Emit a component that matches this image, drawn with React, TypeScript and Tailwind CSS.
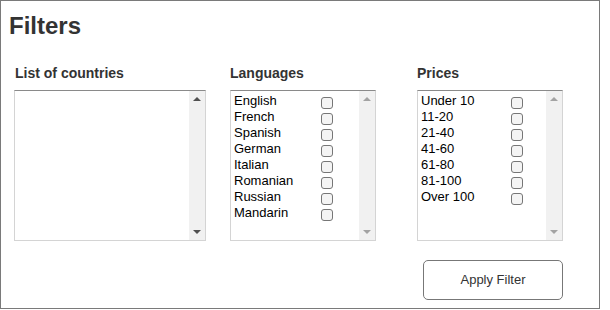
import type { ReactNode } from 'react'

const languages = ['English', 'French', 'Spanish', 'German', 'Italian', 'Romanian', 'Russian', 'Mandarin']
const prices = ['Under 10', '11-20', '21-40', '41-60', '61-80', '81-100', 'Over 100']

function ListBox({ width, dark, children }: { width: string; dark?: boolean; children?: ReactNode }) {
  return (
    <div className={`${width} h-[151px] flex border border-[#d4d4d4] border-t-[#8a8a8a] bg-white`}>
      <div className="flex-1 pt-[2px] pl-[3px]">{children}</div>
      {/* fake scrollbar */}
      <div className="w-[16px] bg-[#f1f1f1] flex flex-col items-center justify-between py-[6px]">
        <span
          className={`w-0 h-0 border-l-[4px] border-r-[4px] border-b-[4px] border-l-transparent border-r-transparent ${
            dark ? 'border-b-[#505050]' : 'border-b-[#a3a3a3]'
          }`}
        />
        <span
          className={`w-0 h-0 border-l-[4px] border-r-[4px] border-t-[4px] border-l-transparent border-r-transparent ${
            dark ? 'border-t-[#505050]' : 'border-t-[#a3a3a3]'
          }`}
        />
      </div>
    </div>
  )
}

function Row({ label, boxLeft }: { label: string; boxLeft: string }) {
  return (
    <div className="relative h-[16px] leading-[16px] text-[13px] text-black">
      {label}
      <span
        className={`absolute top-[4px] ${boxLeft} w-[12px] h-[12px] rounded-[3px] border border-[#767676] bg-[#f4f4f4]`}
      />
    </div>
  )
}

export default function App() {
  return (
    <div className="w-[600px] h-[309px] border border-[#7a7a7a] bg-white font-['Liberation_Sans',Arial,sans-serif] text-[#333]">
      <h1 className="pl-[8px] pt-[12px] text-[24px] leading-[26px] font-bold">Filters</h1>

      <div className="flex pt-[26px]">
        <div className="ml-[13px] w-[192px]">
          <h2 className="pl-px text-[14px] leading-[16px] font-bold mb-[9px]">List of countries</h2>
          <ListBox width="w-[192px]" dark />
        </div>

        <div className="ml-[24px] w-[146px]">
          <h2 className="text-[14px] leading-[16px] font-bold mb-[9px]">Languages</h2>
          <ListBox width="w-[146px]">
            {languages.map((l) => (
              <Row key={l} label={l} boxLeft="left-[87px]" />
            ))}
          </ListBox>
        </div>

        <div className="ml-[41px] w-[146px]">
          <h2 className="text-[14px] leading-[16px] font-bold mb-[9px]">Prices</h2>
          <ListBox width="w-[146px]">
            {prices.map((p) => (
              <Row key={p} label={p} boxLeft="left-[90px]" />
            ))}
          </ListBox>
        </div>
      </div>

      <div className="flex justify-end pr-[36px] pt-[19px]">
        <button className="w-[140px] h-[40px] rounded-[5px] border border-[#777] bg-white text-[13px] text-[#333]">
          Apply Filter
        </button>
      </div>
    </div>
  )
}
